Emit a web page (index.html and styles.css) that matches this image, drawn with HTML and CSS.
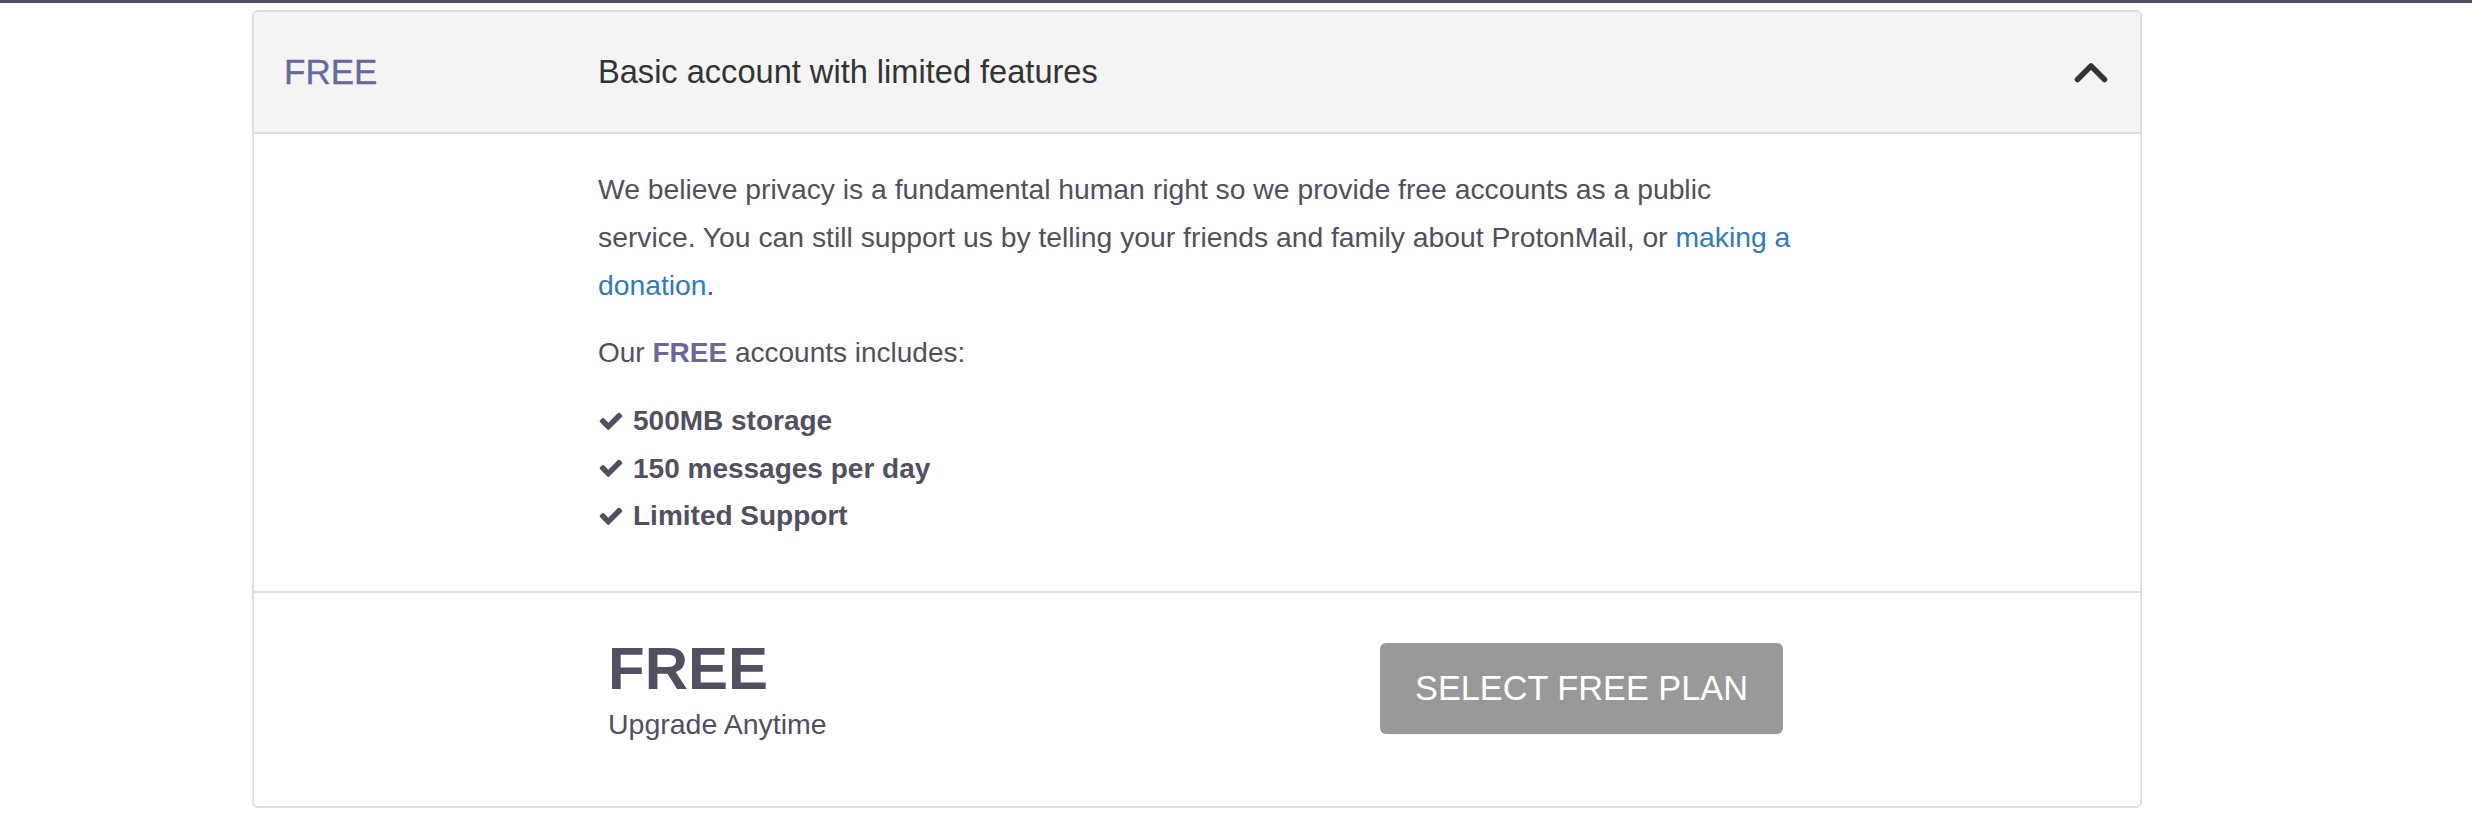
FILE: index.html
```html
<!DOCTYPE html>
<html lang="en">
<head>
<meta charset="utf-8">
<title>FREE plan</title>
<link rel="stylesheet" href="styles.css">
</head>
<body>
<div class="topbar"></div>
<div class="page">
  <div class="card">
    <div class="card-head">
      <div class="plan-name">FREE</div>
      <div class="plan-desc">Basic account with limited features</div>
      <svg class="chev" viewBox="0 0 34 21" aria-hidden="true"><polyline points="3.5,17.5 17,4 30.5,17.5" fill="none" stroke="#333" stroke-width="5.5" stroke-linecap="round" stroke-linejoin="round"/></svg>
    </div>
    <div class="card-body">
      <div class="content">
        <p class="intro">We believe privacy is a fundamental human right so we provide free accounts as a public service. You can still support us by telling your friends and family about ProtonMail, or <a href="#" class="link">making a donation</a>.</p>
        <p>Our <strong class="accent">FREE</strong> accounts includes:</p>
        <ul class="features">
          <li><svg class="check" viewBox="125 290 1546 1232" aria-hidden="true"><path fill="#505061" d="M1671 566q0 40-28 68l-724 724-136 136q-28 28-68 28t-68-28l-136-136-362-362q-28-28-28-68t28-68l136-136q28-28 68-28t68 28l294 295 656-657q28-28 68-28t68 28l136 136q28 28 28 68z"/></svg><span>500MB storage</span></li>
          <li><svg class="check" viewBox="125 290 1546 1232" aria-hidden="true"><path fill="#505061" d="M1671 566q0 40-28 68l-724 724-136 136q-28 28-68 28t-68-28l-136-136-362-362q-28-28-28-68t28-68l136-136q28-28 68-28t68 28l294 295 656-657q28-28 68-28t68 28l136 136q28 28 28 68z"/></svg><span>150 messages per day</span></li>
          <li><svg class="check" viewBox="125 290 1546 1232" aria-hidden="true"><path fill="#505061" d="M1671 566q0 40-28 68l-724 724-136 136q-28 28-68 28t-68-28l-136-136-362-362q-28-28-28-68t28-68l136-136q28-28 68-28t68 28l294 295 656-657q28-28 68-28t68 28l136 136q28 28 28 68z"/></svg><span>Limited Support</span></li>
        </ul>
      </div>
    </div>
    <div class="card-foot">
      <div class="foot-row">
        <div class="price">
          <div class="price-big">FREE</div>
          <div class="price-sub">Upgrade Anytime</div>
        </div>
        <button class="btn" type="button">SELECT FREE PLAN</button>
      </div>
    </div>
  </div>
</div>
</body>
</html>
```

FILE: styles.css
```css
html, body {
  margin: 0;
  padding: 0;
  background: #ffffff;
}
body {
  font-family: "Liberation Sans", Arial, sans-serif;
  color: #505061;
}
.topbar {
  height: 3px;
  background: #4f4e62;
}
.page {
  padding: 7px 0 0 252px;
}
.card {
  width: 1890px;
  box-sizing: border-box;
  border: 2px solid #dedede;
  border-radius: 6px;
  overflow: hidden;
  background: #fff;
}
.card-head {
  display: flex;
  align-items: center;
  height: 120px;
  padding: 0 32px 0 30px;
  background: #f4f4f4;
  border-bottom: 2px solid #dedede;
}
.plan-name {
  width: 314px;
  font-size: 35px;
  color: #66699c;
  -webkit-text-stroke: 0.3px #66699c;
}
.plan-desc {
  flex: 1;
  font-size: 32.6px;
  color: #333333;
}
.chev {
  width: 34px;
  height: 21px;
  display: block;
}
.card-body {
  padding: 31px 0 51px 344px;
}
.content {
  width: 1200px;
  font-size: 28px;
  line-height: 48px;
  color: #505061;
}
.content p {
  margin: 0 0 20px;
}
.content .intro {
  font-size: 28.3px;
}
.link {
  color: #2f7bbd;
  text-decoration: none;
}
.accent {
  color: #66699c;
}
.features {
  list-style: none;
  margin: 0;
  padding: 0;
}
.features li {
  display: flex;
  align-items: center;
  gap: 10px;
  font-weight: bold;
  line-height: 47.5px;
}
.check {
  width: 24px;
  height: 18px;
  display: block;
  margin-left: 1px;
}
.card-foot {
  border-top: 2px solid #dedede;
  padding: 44px 0 65px 344px;
}
.foot-row {
  width: 1200px;
  box-sizing: border-box;
  padding: 0 15px 0 10px;
  display: flex;
  justify-content: space-between;
  align-items: center;
}
.price-big {
  font-weight: bold;
  font-size: 60px;
  line-height: 63px;
  color: #505061;
}
.price-sub {
  margin-top: 7px;
  font-size: 28.5px;
  line-height: 34px;
  color: #505061;
}
.btn {
  width: 403px;
  height: 91px;
  background: #999999;
  color: #ffffff;
  border: 0;
  border-radius: 6px;
  font-family: "Liberation Sans", Arial, sans-serif;
  font-size: 34.3px;
  padding: 0;
  cursor: pointer;
}
```
